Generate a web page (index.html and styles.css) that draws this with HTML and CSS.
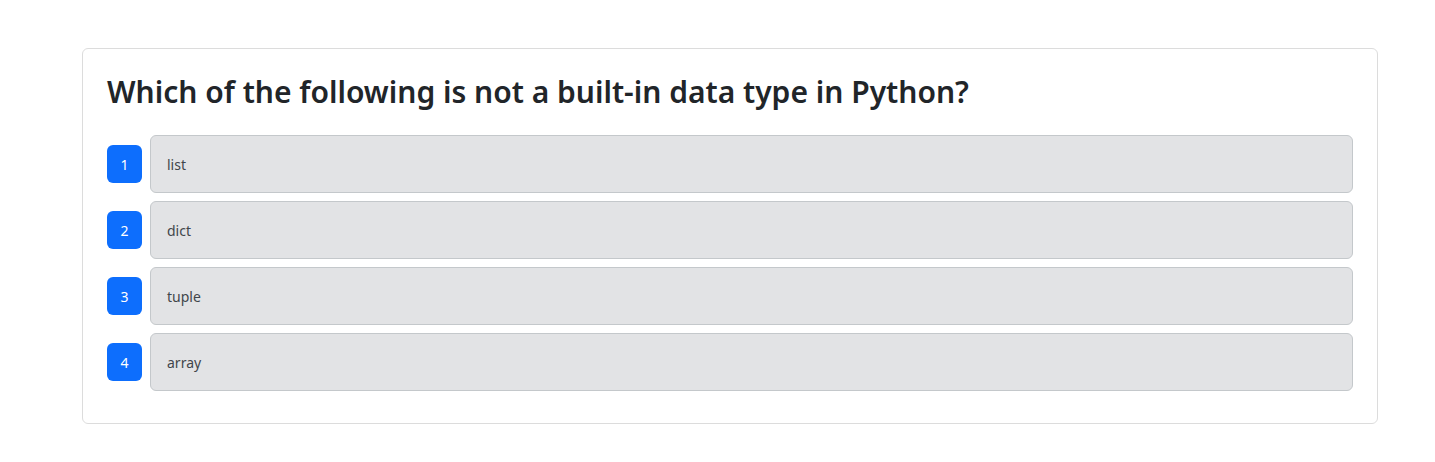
FILE: index.html
```html
<!DOCTYPE html>
<html lang="en">
<head>
<meta charset="utf-8">
<title>Quiz</title>
<link rel="stylesheet" href="styles.css">
</head>
<body>
<main class="page">
  <section class="card">
    <h3 class="question">Which of the following is not a built-in data type in Python?</h3>
    <ul class="options">
      <li class="option"><span class="badge">1</span><div class="answer">list</div></li>
      <li class="option"><span class="badge">2</span><div class="answer">dict</div></li>
      <li class="option"><span class="badge">3</span><div class="answer">tuple</div></li>
      <li class="option"><span class="badge">4</span><div class="answer">array</div></li>
    </ul>
  </section>
</main>
</body>
</html>
```
FILE: styles.css
```css
* { box-sizing: border-box; }
body {
  margin: 0;
  background: #fff;
  font-family: "Noto Sans", "Open Sans", sans-serif;
  color: #212529;
}
.page {
  padding: 48px 0 0 82px;
}
.card {
  width: 1296px;
  border: 1px solid #dcdcdc;
  border-radius: 6px;
  padding: 24px 24px 32px 24px;
  background: #fff;
}
.question {
  margin: 0 0 24px 0;
  font-size: 30px;
  font-weight: 600;
  line-height: 38px;
  color: #212529;
}
.options {
  list-style: none;
  margin: 0;
  padding: 0;
  display: flex;
  flex-direction: column;
  gap: 8px;
}
.option {
  display: flex;
  align-items: center;
  gap: 8px;
}
.badge {
  flex: 0 0 35px;
  height: 38px;
  border-radius: 6px;
  background: #0d6efd;
  color: #fff;
  font-size: 14px;
  display: flex;
  align-items: center;
  justify-content: center;
}
.answer {
  flex: 1;
  height: 58px;
  background: #e2e3e5;
  border: 1px solid #c4c8cb;
  border-radius: 6px;
  padding: 0 16px;
  display: flex;
  align-items: center;
  font-size: 14px;
  color: #41464b;
}
```
